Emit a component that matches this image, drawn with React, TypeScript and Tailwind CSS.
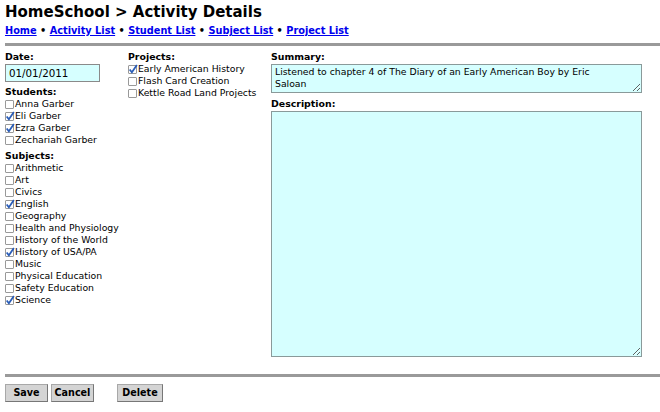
import React from "react";

const F = { fontFamily: '"DejaVu Sans", Verdana, sans-serif' };

function Box({ checked }: { checked?: boolean }) {
  return (
    <span className="relative inline-block w-[9px] h-[9px] border border-[#999] bg-white mr-[1px] shrink-0 rounded-[1px]">
      {checked && (
        <svg viewBox="0 0 9 9" className="absolute left-[-1px] top-[-2px] w-[10px] h-[10px]">
          <path d="M1.5 5 L3.5 7.5 L8 1" fill="none" stroke="#2a5db8" strokeWidth="1.6" />
        </svg>
      )}
    </span>
  );
}

function Item({ label, checked }: { label: string; checked?: boolean }) {
  return (
    <div className="flex items-center h-[12px] text-[9.3px] leading-[12px] text-black whitespace-nowrap">
      <Box checked={checked} />
      <span>{label}</span>
    </div>
  );
}

function Label({ children }: { children: React.ReactNode }) {
  return <div className="text-[9.4px] font-bold leading-[12px] h-[12px] text-black">{children}</div>;
}

const btn =
  "h-[18px] bg-[#d4d4d4] border border-[#a8a8a8] border-b-[#777] border-r-[#777] text-[9.6px] font-bold leading-[14px] text-black";

export default function App() {
  const students: [string, boolean][] = [
    ["Anna Garber", false],
    ["Eli Garber", true],
    ["Ezra Garber", true],
    ["Zechariah Garber", false],
  ];
  const subjects: [string, boolean][] = [
    ["Arithmetic", false],
    ["Art", false],
    ["Civics", false],
    ["English", true],
    ["Geography", false],
    ["Health and Physiology", false],
    ["History of the World", false],
    ["History of USA/PA", true],
    ["Music", false],
    ["Physical Education", false],
    ["Safety Education", false],
    ["Science", true],
  ];
  const projects: [string, boolean][] = [
    ["Early American History", true],
    ["Flash Card Creation", false],
    ["Kettle Road Land Projects", false],
  ];
  return (
    <div className="w-[660px] h-[412px] bg-white overflow-hidden pl-[5px]" style={F}>
      <div className="pt-[2px] text-[15px] font-bold leading-[20px] h-[22px] text-black whitespace-nowrap">
        HomeSchool &gt; Activity Details
      </div>
      <div className="mt-[3px] text-[9.75px] font-bold leading-[12px] h-[12px] text-black whitespace-nowrap">
        <a className="text-[#0000ee] underline">Home</a> • <a className="text-[#0000ee] underline">Activity List</a> •{" "}
        <a className="text-[#0000ee] underline">Student List</a> • <a className="text-[#0000ee] underline">Subject List</a> •{" "}
        <a className="text-[#0000ee] underline">Project List</a>
      </div>
      <div className="mt-[6px] h-[3px] bg-[#9a9a9a]" />
      <div className="mt-[5px] flex">
        <div className="w-[123px]">
          <Label>Date:</Label>
          <div className="mt-[1px] w-[95px] h-[18px] border border-[#8a8a8a] bg-[#d6ffff] text-[10.3px] leading-[16px] px-[3px] text-black">
            01/01/2011
          </div>
          <div className="mt-[4px]">
            <Label>Students:</Label>
            {students.map(([l, c]) => (
              <Item key={l} label={l} checked={c} />
            ))}
          </div>
          <div className="mt-[4px]">
            <Label>Subjects:</Label>
            {subjects.map(([l, c]) => (
              <Item key={l} label={l} checked={c} />
            ))}
          </div>
        </div>
        <div className="w-[143px]">
          <Label>Projects:</Label>
          {projects.map(([l, c]) => (
            <Item key={l} label={l} checked={c} />
          ))}
        </div>
        <div className="w-[371px]">
          <Label>Summary:</Label>
          <textarea
            readOnly
            className="block mt-[1px] w-[371px] h-[29px] border border-[#8a9a9a] bg-[#d6ffff] text-[9.3px] leading-[12px] pl-[3px] pr-[30px] py-[1px] text-black resize-y outline-none overflow-hidden"
            style={F}
            defaultValue="Listened to chapter 4 of The Diary of an Early American Boy by Eric Saloan"
          />
          <div className="mt-[5px]">
            <Label>Description:</Label>
          </div>
          <textarea
            readOnly
            className="block mt-[1px] w-[371px] h-[246px] border border-[#8a9a9a] bg-[#d6ffff] text-[9.2px] px-[2px] text-black resize-y outline-none"
            style={F}
            defaultValue=""
          />
        </div>
      </div>
      <div className="mt-[17px] h-[3px] bg-[#9a9a9a]" />
      <div className="mt-[7px] flex">
        <button className={`${btn} w-[43px]`}>Save</button>
        <button className={`${btn} w-[43px] ml-[3px]`}>Cancel</button>
        <button className={`${btn} w-[46px] ml-[23px]`}>Delete</button>
      </div>
    </div>
  );
}
